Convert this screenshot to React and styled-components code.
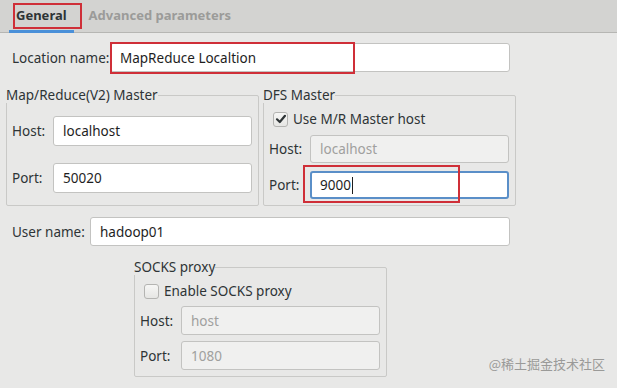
import React from "react";
import styled, { createGlobalStyle } from "styled-components";

const GlobalStyle = createGlobalStyle`
    html, body {
        margin: 0;
        padding: 0;
        background: #e8e8e7;
    }
    body {
        font-family: "Noto Sans", "Liberation Sans", sans-serif;
        font-size: 13.5px;
        color: #2e3436;
    }
`;

const Page = styled.div`
    position: relative;
    width: 617px;
    height: 388px;
    overflow: hidden;
    background: #e8e8e7;
`;

const TabBar = styled.div`
    display: flex;
    gap: 9px;
    height: 33px;
    background: #d3d3d1;
    border-bottom: 1px solid #b6b6b3;
    box-sizing: border-box;
    padding-left: 9px;
`;

const Tab = styled.div`
    display: flex;
    align-items: center;
    padding: 0 ${(p) => (p.$active ? 7 : 6)}px;
    font-size: 13px;
    font-weight: bold;
    color: ${(p) => (p.$active ? "#2e3436" : "#9b9b99")};
    border-bottom: 3px solid ${(p) => (p.$active ? "#4a90d9" : "transparent")};
    margin-bottom: -1px;
`;

const Mark = styled.div`
    position: absolute;
    border: 2px solid #cf2f38;
    pointer-events: none;
`;

const Body = styled.div`
    padding: 10px 0 0 6px;
    width: 504px;
`;

const Row = styled.div`
    display: flex;
    align-items: center;
    padding-left: ${(p) => p.$indent || 0}px;
    margin-bottom: ${(p) => p.$after || 0}px;
`;

const Label = styled.span`
    white-space: nowrap;
    width: ${(p) => (p.$w ? `${p.$w}px` : "auto")};
    flex: none;
`;

const Input = styled.div`
    flex: 1;
    display: flex;
    align-items: center;
    height: ${(p) => p.$h || 28}px;
    box-sizing: border-box;
    border-radius: 3px;
    background: ${(p) => (p.$disabled ? "#f0f0ef" : "#ffffff")};
    color: ${(p) => (p.$disabled ? "#a0a09e" : "#1e1e1e")};
    border: ${(p) => (p.$focus ? "2px solid #5a8fc8" : "1px solid #c3c3c1")};
    padding-left: ${(p) => (p.$focus ? 8 : 9)}px;
`;

const Caret = styled.span`
    display: inline-block;
    width: 1px;
    height: 17px;
    background: #1e1e1e;
    margin-left: 1px;
`;

const Groups = styled.div`
    display: grid;
    grid-template-columns: 253px 253px;
    gap: 4px;
    margin-top: 15px;
`;

const Group = styled.fieldset`
    margin: 0;
    padding: 0;
    border: 1px solid #c9c9c7;
    border-radius: 2px;
    min-width: 0;
    width: ${(p) => p.$w || "auto"};
    box-sizing: border-box;
`;

const Legend = styled.legend`
    padding: 0;
    margin-left: -1px;
    line-height: 16px;
`;

const GroupBody = styled.div`
    display: flex;
    flex-direction: column;
    gap: ${(p) => p.$gap || 8}px;
    padding: ${(p) => p.$pad || "12px 6px 10px 5px"};
`;

const Check = styled.span`
    display: inline-flex;
    align-items: center;
    justify-content: center;
    width: 15px;
    height: 15px;
    margin-right: 5px;
    box-sizing: border-box;
    border: 1px solid #b4b4b2;
    border-radius: 3px;
    background: linear-gradient(#f6f6f5, #e6e6e4);
`;

const Watermark = styled.div`
    position: absolute;
    right: 12px;
    bottom: 15px;
    font-family: "Noto Sans CJK SC", sans-serif;
    font-size: 13px;
    color: #9a9a98;
`;

const CheckMark = () => (
    <svg width="12" height="12" viewBox="0 0 12 12">
        <path d="M2 6.3 L4.8 9 L10 2.8" fill="none" stroke="#2e3436" strokeWidth="2.2" strokeLinecap="round" strokeLinejoin="round" />
    </svg>
);

const App = () => {
    return (
        <Page>
            <GlobalStyle />
            <TabBar>
                <Tab $active>General</Tab>
                <Tab>Advanced parameters</Tab>
            </TabBar>
            <Mark style={{ left: 13, top: 3, width: 65, height: 22 }} />

            <Body>
                <Row $indent={6}>
                    <Label $w={98}>Location name:</Label>
                    <Input $h={29}>MapReduce Localtion</Input>
                </Row>

                <Groups>
                    <Group>
                        <Legend>Map/Reduce(V2) Master</Legend>
                        <GroupBody $gap={17} $pad="13px 6px 8px 5px">
                            <Row>
                                <Label $w={41}>Host:</Label>
                                <Input $h={30}>localhost</Input>
                            </Row>
                            <Row>
                                <Label $w={41}>Port:</Label>
                                <Input $h={30}>50020</Input>
                            </Row>
                        </GroupBody>
                    </Group>
                    <Group>
                        <Legend>DFS Master</Legend>
                        <GroupBody $gap={8} $pad="7px 6px 6px 5px">
                            <Row $indent={4} $after={-1}>
                                <Check><CheckMark /></Check>
                                <Label>Use M/R Master host</Label>
                            </Row>
                            <Row>
                                <Label $w={41}>Host:</Label>
                                <Input $disabled>localhost</Input>
                            </Row>
                            <Row>
                                <Label $w={41}>Port:</Label>
                                <Input $focus>9000<Caret /></Input>
                            </Row>
                        </GroupBody>
                    </Group>
                </Groups>

                <Row $indent={6} style={{ marginTop: 11 }}>
                    <Label $w={78}>User name:</Label>
                    <Input $h={29}>hadoop01</Input>
                </Row>

                <Group $w="253px" style={{ marginLeft: 128, marginTop: 13 }}>
                    <Legend>SOCKS proxy</Legend>
                    <GroupBody $gap={6} $pad="7px 6px 6px 5px">
                        <Row $indent={4}>
                            <Check />
                            <Label>Enable SOCKS proxy</Label>
                        </Row>
                        <Row>
                            <Label $w={41}>Host:</Label>
                            <Input $h={29} $disabled>host</Input>
                        </Row>
                        <Row>
                            <Label $w={41}>Port:</Label>
                            <Input $h={29} $disabled>1080</Input>
                        </Row>
                    </GroupBody>
                </Group>
            </Body>

            <Mark style={{ left: 110, top: 42, width: 241, height: 28 }} />
            <Mark style={{ left: 303, top: 165, width: 153, height: 34 }} />
            <Watermark>@稀土掘金技术社区</Watermark>
        </Page>
    );
};

export default App;
